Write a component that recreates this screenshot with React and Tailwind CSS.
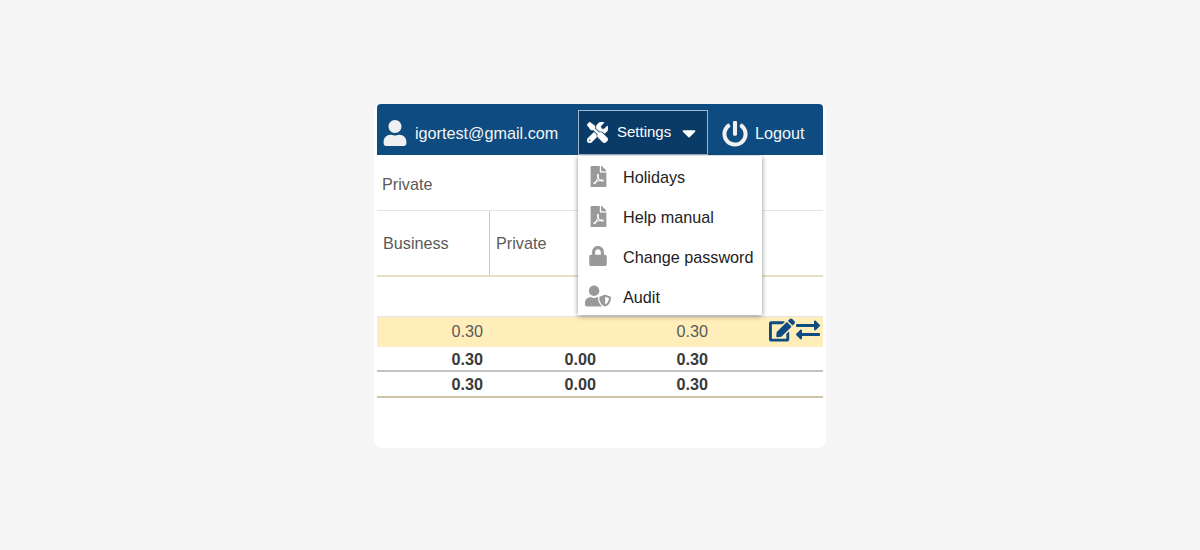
import React from 'react';
import { FaUser, FaTools, FaCaretDown, FaPowerOff, FaFilePdf, FaLock, FaUserShield, FaEdit, FaExchangeAlt } from 'react-icons/fa';

const menuItems = [
  { label: 'Holidays', icon: <FaFilePdf size={21} /> },
  { label: 'Help manual', icon: <FaFilePdf size={21} /> },
  { label: 'Change password', icon: <FaLock size={20} /> },
  { label: 'Audit', icon: <FaUserShield size={26} /> },
];

const Cell = ({ children, bold }) => (
  <div className={`text-right ${bold ? 'font-bold text-[#3a3a3a]' : 'text-[#5a5a5a]'}`}>{children}</div>
);

const Row = ({ values, bold, className, children }) => (
  <div className={`relative grid grid-cols-[106px_113px_112px] items-center ${className}`}>
    {values.map((v, i) => (
      <Cell key={i} bold={bold}>{v}</Cell>
    ))}
    {children}
  </div>
);

export default function App() {
  return (
    <div className="w-[1200px] h-[550px] bg-[#f5f5f5] flex items-start justify-center pt-[104px] font-['Liberation_Sans',Arial,sans-serif] text-[16.2px]">
      <div className="relative w-[452px] h-[344px] bg-white rounded-lg px-[3px]">
        <div className="h-[51px] bg-[#0d4b80] rounded-t-[4px] flex items-end text-white">
          <div className="flex items-center w-[201px] h-[44px] pl-[6px] pt-[1px]">
            <FaUser size={26} className="text-[#f0f0f0] ml-[-1px] mr-[7px] mt-[-2px]" />
            <span className="text-[#f4f4f4]">igortest@gmail.com</span>
          </div>
          <button className="w-[130px] h-[45px] bg-[#0a3a66] border border-[#9fb6cb] flex items-center pl-[8px] text-white">
            <FaTools size={21} stroke="currentColor" strokeWidth={16} className="mr-[9px]" />
            <span className="text-[15px]">Settings</span>
            <FaCaretDown size={22} className="ml-[7px]" />
          </button>
          <div className="flex items-center h-[44px] ml-[14px] pt-[1px]">
            <FaPowerOff size={26} className="mr-[7px] text-[#f0f0f0]" />
            <span className="text-[#f4f4f4]">Logout</span>
          </div>
        </div>

        <div className="h-[56px] flex items-center pl-[5px] pt-[3px] text-[#5a5a5a] border-b border-[#e5e5e5]">Private</div>

        <div className="h-[66px] flex border-b-2 border-[#e8dfc8] text-[#5a5a5a]">
          <div className="w-[113px] border-r border-[#cccccc] flex items-center pl-[6px] pt-[1px]">Business</div>
          <div className="flex items-center pl-[6px] pt-[1px]">Private</div>
        </div>

        <div className="h-[40px] border-b border-[#e5e5e5]"></div>

        <Row values={['0.30', '', '0.30']} className="h-[30px] bg-[#ffeeba] pb-[2px]">
          <div className="absolute right-[3px] top-0 flex items-center text-[#0d4b80]">
            <FaEdit size={26} className="ml-[1px]" />
            <FaExchangeAlt size={24} className="ml-[1px]" />
          </div>
        </Row>
        <Row values={['0.30', '0.00', '0.30']} bold className="h-[25px] border-b-2 border-[#c2c2c2] pb-[2px]" />
        <Row values={['0.30', '0.00', '0.30']} bold className="h-[26px] border-b-2 border-[#cfc4a6]" />

        <div className="absolute left-[204px] top-[52px] w-[184px] h-[159px] bg-white shadow-[0_1px_5px_rgba(0,0,0,0.45)] text-[#222]">
          {menuItems.map((item) => (
            <div key={item.label} className="h-[40px] flex items-center">
              <div className="w-[40px] mr-[5px] flex items-center justify-center text-[#999]">{item.icon}</div>
              <span className="pt-[2px]">{item.label}</span>
            </div>
          ))}
        </div>
      </div>
    </div>
  );
}
